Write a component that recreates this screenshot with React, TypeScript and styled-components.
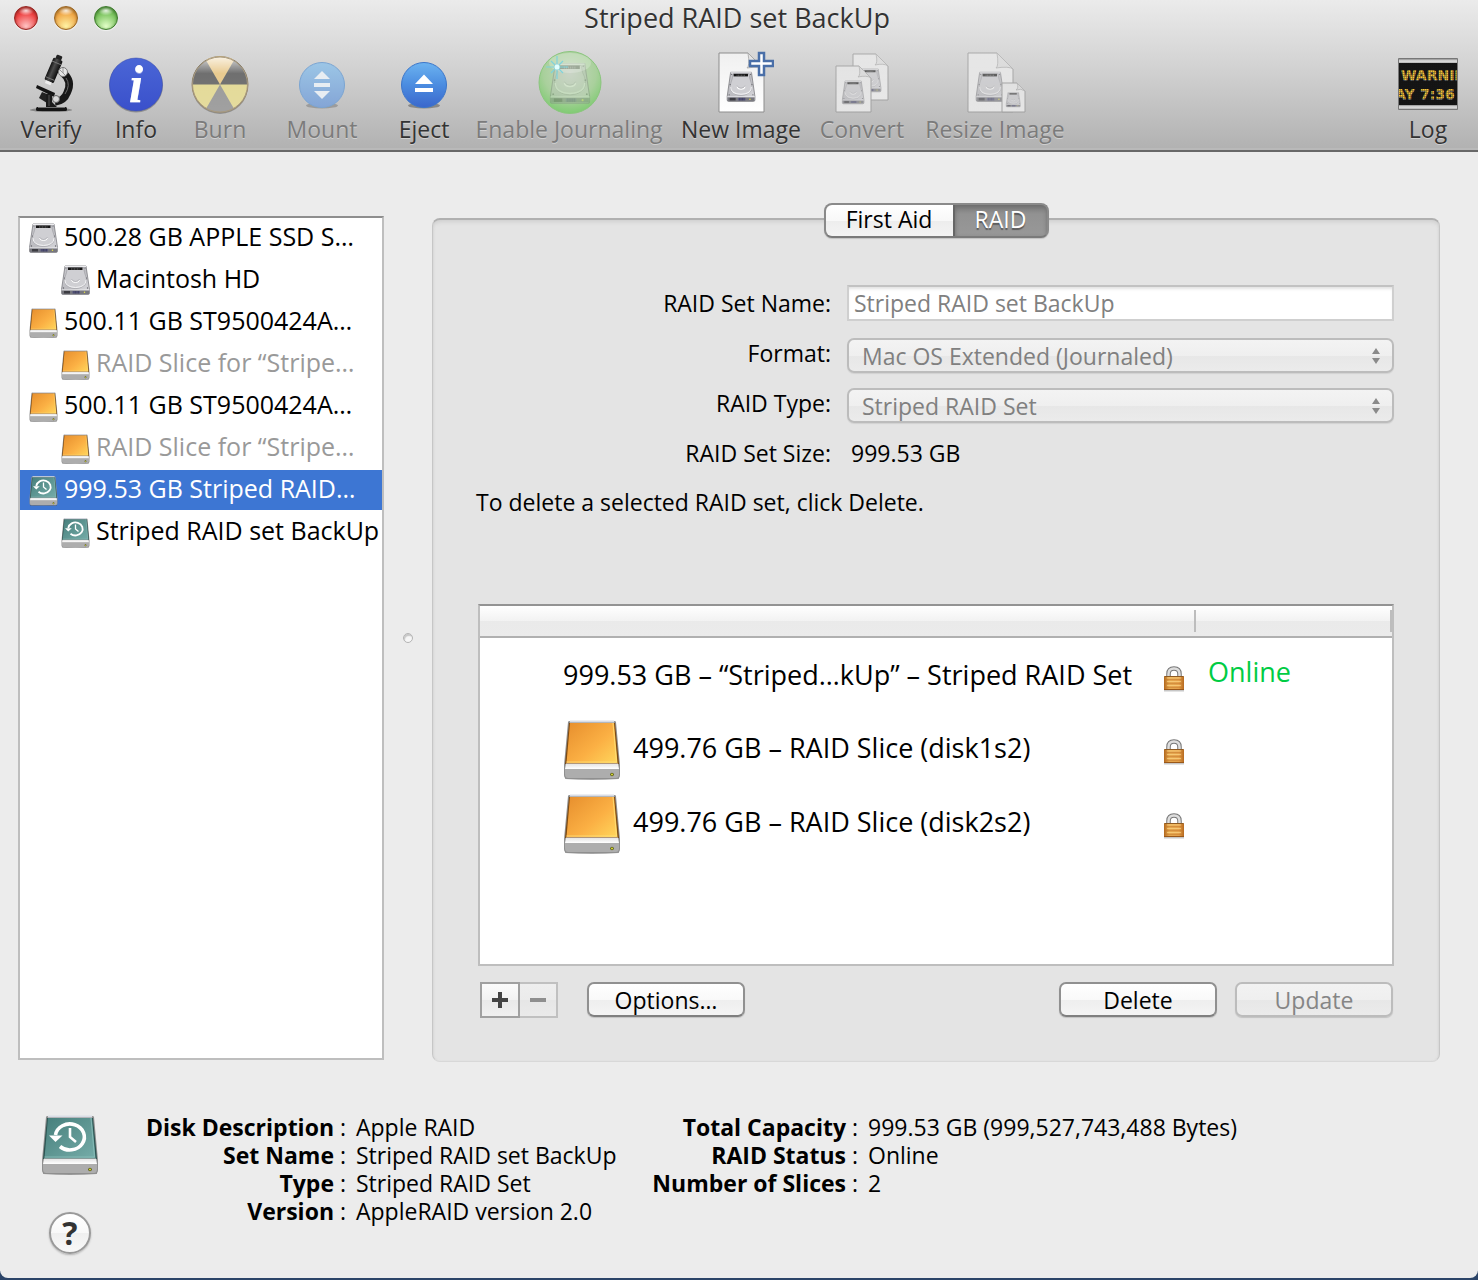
import React from "react";
import styled, { createGlobalStyle, css } from "styled-components";

const GlobalStyle = createGlobalStyle`
  *, *::before, *::after { box-sizing: border-box; }
  body { margin: 0; background: #2b4468; }
  body, button, input, select { font-family: "Open Sans", "Noto Sans", sans-serif; font-weight: 500; }
`;

/* ---------- window ---------- */

const Window = styled.div`
  display: flex;
  flex-direction: column;
  min-height: calc(100vh - 2px);
  min-width: 1280px;
  background: #ececec;
  border-radius: 0 0 8px 8px;
  color: #000;
  font-size: 23px;
  line-height: 28px;
`;

const Header = styled.header`
  background: linear-gradient(#ebebeb, #d2d2d2 45%, #b1b1b1);
  border-bottom: 2px solid #686868;
  box-shadow: inset 0 -2px 0 #b9b9b9;
`;

const TitleBar = styled.div`
  display: grid;
  grid-template-columns: 1fr auto 1fr;
  align-items: center;
  height: 36px;
  padding: 0 18px 0 14px;
`;

const Lights = styled.div`
  display: flex;
  gap: 16px;
`;

const Light = styled.button<{ $rim: string; $mid: string; $glow: string }>`
  width: 24px;
  height: 24px;
  padding: 0;
  border: 1px solid ${(p) => p.$rim};
  border-radius: 50%;
  background:
    radial-gradient(ellipse 8px 5px at 50% 16%, rgba(255, 255, 255, 0.85), rgba(255, 255, 255, 0) 100%),
    radial-gradient(circle at 50% 88%, ${(p) => p.$glow}, ${(p) => p.$mid} 60%, ${(p) => p.$rim} 110%);
  box-shadow: inset 0 1px 3px ${(p) => p.$rim}, 0 1px 1px rgba(255, 255, 255, 0.6);
`;

const Title = styled.h1`
  margin: 0;
  font-size: 27px;
  line-height: 36px;
  font-weight: 500;
  color: #333;
  text-shadow: 0 1px 0 rgba(255, 255, 255, 0.6);
`;

const Toolbar = styled.div`
  display: flex;
  gap: 20px;
  height: 114px;
  padding: 14px 18px 0;
`;

const ToolButton = styled.button<{ $width: number; $last?: boolean }>`
  display: flex;
  flex-direction: column;
  align-items: center;
  flex: none;
  width: ${(p) => p.$width}px;
  padding: 0;
  border: 0;
  background: none;
  font-size: 23px;
  line-height: 30px;
  color: #333;
  white-space: nowrap;
  text-shadow: 0 1px 0 rgba(255, 255, 255, 0.4);
  ${(p) => p.$last && css`margin-left: auto;`}
  &:disabled { color: #7b7b7b; }
  svg { display: block; flex: none; }
`;

/* ---------- body ---------- */

const Body = styled.main`
  display: flex;
  flex: 1;
  padding: 64px 38px 0 18px;
`;

const DiskList = styled.ul`
  display: flex;
  flex-direction: column;
  gap: 2px;
  flex: none;
  width: 366px;
  margin: 0;
  padding: 0;
  list-style: none;
  background: #fff;
  border: 2px solid #bebebe;
  border-top-color: #8e8e8e;
`;

const DiskRow = styled.li<{ $child?: boolean; $dim?: boolean; $selected?: boolean }>`
  display: flex;
  align-items: center;
  gap: 6px;
  height: 40px;
  padding-left: ${(p) => (p.$child ? 41 : 9)}px;
  font-size: 25px;
  line-height: 36px;
  white-space: nowrap;
  overflow: hidden;
  color: ${(p) => (p.$selected ? "#fff" : p.$dim ? "#999" : "#000")};
  background: ${(p) => (p.$selected ? "#3d76d3" : "transparent")};
  svg { flex: none; }
  span { padding-bottom: 4px; }
`;

const Splitter = styled.div`
  display: flex;
  align-items: center;
  justify-content: center;
  flex: none;
  width: 48px;
  &::before {
    content: "";
    width: 10px;
    height: 10px;
    border-radius: 50%;
    border: 1px solid #b4b4b4;
    background: #f6f6f6;
    box-shadow: inset 1px 2px 1px #c8c8c8;
  }
`;

const Panel = styled.section`
  display: flex;
  flex-direction: column;
  flex: 1;
  min-width: 0;
  margin: 2px 0 -2px;
  padding: 0 45px 43px;
  background: #e4e4e4;
  border: 1px solid #c6c6c6;
  border-top: 2px solid #b0b0b0;
  border-bottom-color: #d8d8d8;
  border-radius: 8px;
  box-shadow: inset 0 4px 4px -2px #cfcfcf, inset 2px 0 2px -1px #dadada, inset -2px 0 2px -1px #dadada;
`;

const Tabs = styled.div`
  display: flex;
  align-self: center;
  margin: -17px 0 47px;
  border: 2px solid #8a8a8a;
  border-bottom-color: #7a7a7a;
  border-radius: 8px;
  background: #8a8a8a;
  overflow: hidden;
  box-shadow: 0 1px 1px rgba(0, 0, 0, 0.15);
`;

const Tab = styled.button<{ $active?: boolean; $width: number }>`
  width: ${(p) => p.$width}px;
  height: 31px;
  padding: 0 0 2px;
  border: 0;
  font-size: 23px;
  line-height: 29px;
  color: ${(p) => (p.$active ? "#fff" : "#000")};
  background: ${(p) =>
    p.$active ? "linear-gradient(#7b7b7b, #929292 30%, #989898)" : "linear-gradient(#fff 0, #f8f8f8 50%, #ededed 51%, #f3f3f3)"};
  text-shadow: ${(p) => (p.$active ? "0 2px 1px rgba(0,0,0,.4)" : "none")};
  ${(p) => p.$active && css`border-left: 2px solid #666; box-shadow: inset 0 2px 4px #6d6d6d;`}
`;

const Form = styled.form`
  display: grid;
  grid-template-columns: 353px 1fr;
  column-gap: 16px;
`;

const Label = styled.label`
  height: 50px;
  line-height: 36px;
  text-align: right;
`;

const Field = styled.div`
  position: relative;
  height: 50px;
`;

const TextInput = styled.input`
  display: block;
  width: 100%;
  height: 36px;
  padding: 0 5px;
  border: 2px solid #cfcfcf;
  border-top-color: #c2c2c2;
  background: #fff;
  box-shadow: inset 0 3px 3px -1px #e2e2e2;
  font-size: 23px;
  color: #808080;
`;

const Select = styled.select`
  appearance: none;
  display: block;
  width: 100%;
  height: 35px;
  margin-top: 3px;
  padding: 0 40px 0 13px;
  border: 2px solid #bcbcbc;
  border-radius: 7px;
  background: linear-gradient(#f3f3f3, #efefef 50%, #e7e7e7 51%, #ebebeb);
  box-shadow: 0 1px 1px rgba(0, 0, 0, 0.08);
  font-size: 23px;
  color: #808080;
  opacity: 1;
`;

const Arrows = styled.svg`
  position: absolute;
  right: 13px;
  top: 12px;
  pointer-events: none;
`;

const SizeValue = styled.output`
  padding-left: 4px;
  line-height: 36px;
`;

const Hint = styled.p`
  margin: 0 0 85px -2px;
  line-height: 34px;
`;

const TableFrame = styled.div`
  flex: 1;
  min-height: 362px;
  background: #fff;
  border: 2px solid #bebebe;
  border-top-color: #939393;
`;

const Table = styled.table`
  width: 100%;
  border-collapse: collapse;
  table-layout: fixed;
  font-size: 27px;
  line-height: 36px;
`;

const HeadCell = styled.th<{ $width?: number }>`
  width: ${(p) => (p.$width ? `${p.$width}px` : "auto")};
  height: 31px;
  padding: 0;
  border-bottom: 2px solid #b0b0b0;
  background:
    linear-gradient(#bdbdbd, #bdbdbd) right 4px / 2px 22px no-repeat,
    linear-gradient(#fff, #f2f2f2 50%, #eaeaea 51%, #ebebeb);
`;

const NameCell = styled.td`
  height: 74px;
  padding: 0 11px 0 83px;
`;

const StateCell = styled.td`
  padding: 0 12px 5px;
  color: #00cc44;
  font-size: 27px;
`;

const Member = styled.div`
  display: flex;
  align-items: center;
  gap: 12px;
  white-space: nowrap;
  svg { flex: none; }
  svg:last-child { margin: 8px 0 0 auto; }
`;

const Actions = styled.div`
  display: flex;
  align-items: flex-start;
  gap: 18px;
  padding: 16px 1px 0 2px;
`;

const Pair = styled.div`
  display: flex;
  margin-right: 11px;
`;

const SquareButton = styled.button<{ $width: number }>`
  display: grid;
  place-items: center;
  width: ${(p) => p.$width}px;
  height: 36px;
  padding: 0;
  border: 2px solid #a0a0a0;
  background: linear-gradient(#fbfbfb, #f2f2f2 50%, #e9e9e9 51%, #f0f0f0);
  color: #444;
  &:disabled {
    border-color: #c0c0c0;
    border-left: 0;
    background: linear-gradient(#eeeeee, #ebebeb 50%, #e6e6e6 51%, #eaeaea);
    color: #8e8e8e;
  }
`;

const PushButton = styled.button<{ $push?: boolean }>`
  width: 158px;
  height: 35px;
  padding: 0;
  border: 2px solid #909090;
  border-bottom-color: #7f7f7f;
  border-radius: 7px;
  background: linear-gradient(#fff, #f9f9f9 50%, #eeeeee 51%, #f4f4f4);
  box-shadow: 0 1px 1px rgba(0, 0, 0, 0.15);
  font-size: 23px;
  line-height: 30px;
  color: #000;
  ${(p) => p.$push && css`margin-left: auto;`}
  &:disabled {
    border-color: #bcbcbc;
    background: linear-gradient(#f2f2f2, #efefef 50%, #e7e7e7 51%, #ebebeb);
    color: #858585;
  }
`;

/* ---------- footer ---------- */

const Footer = styled.footer`
  display: flex;
  align-items: flex-start;
  padding: 51px 38px 24px 40px;
`;

const FooterIcons = styled.div`
  display: flex;
  flex-direction: column;
  align-items: center;
  gap: 37px;
  width: 60px;
`;

const HelpButton = styled.button`
  width: 42px;
  height: 42px;
  padding: 0;
  border: 2px solid #999;
  border-radius: 50%;
  background: linear-gradient(#fff, #f8f8f8 50%, #efefef 51%, #f8f8f8);
  box-shadow: 0 1px 2px rgba(0, 0, 0, 0.25);
  font-size: 32px;
  line-height: 36px;
  font-weight: 700;
  color: #333;
`;

const Facts = styled.dl<{ $labels: number; $values: number }>`
  display: grid;
  grid-template-columns: ${(p) => p.$labels}px ${(p) => p.$values}px;
  column-gap: 6px;
  margin: 2px 0 0;
  white-space: nowrap;
  dt { text-align: right; font-weight: 700; }
  dd { margin: 0; }
  dd::before { content: ":"; display: inline-block; width: 16px; }
`;

/* ---------- drawings ---------- */

const Defs = () => (
  <svg width="0" height="0" style={{ display: "block" }} aria-hidden="true">
    <defs>
      <linearGradient id="metal" x1="0" y1="0" x2="1" y2="1">
        <stop offset="0" stopColor="#c9c9cd" />
        <stop offset="0.5" stopColor="#bcbcc1" />
        <stop offset="1" stopColor="#dcdce0" />
      </linearGradient>
      <linearGradient id="orange" x1="0" y1="0.1" x2="1" y2="1">
        <stop offset="0" stopColor="#e8912f" />
        <stop offset="0.55" stopColor="#fbb044" />
        <stop offset="1" stopColor="#ffd65c" />
      </linearGradient>
      <linearGradient id="teal" x1="0" y1="0" x2="1" y2="1">
        <stop offset="0" stopColor="#477f7c" />
        <stop offset="1" stopColor="#75aca8" />
      </linearGradient>
      <linearGradient id="lip" x1="0" y1="0" x2="0" y2="1">
        <stop offset="0" stopColor="#e2e2e2" />
        <stop offset="1" stopColor="#ffffff" />
      </linearGradient>
      <linearGradient id="brass" x1="0" y1="0" x2="1" y2="0">
        <stop offset="0" stopColor="#b0661c" />
        <stop offset="0.25" stopColor="#eab056" />
        <stop offset="0.75" stopColor="#e9a850" />
        <stop offset="1" stopColor="#b5681e" />
      </linearGradient>
      <linearGradient id="info" x1="0" y1="0" x2="0" y2="1">
        <stop offset="0" stopColor="#4a66d6" />
        <stop offset="1" stopColor="#3a50cb" />
      </linearGradient>
      <linearGradient id="blue" x1="0" y1="0" x2="0" y2="1">
        <stop offset="0" stopColor="#6cb3f0" />
        <stop offset="0.5" stopColor="#4b8ce0" />
        <stop offset="1" stopColor="#3a67cc" />
      </linearGradient>
      <linearGradient id="paleblue" x1="0" y1="0" x2="0" y2="1">
        <stop offset="0" stopColor="#9cc6e6" />
        <stop offset="1" stopColor="#84a5d6" />
      </linearGradient>
      <linearGradient id="burnshine" x1="0" y1="0" x2="0" y2="1">
        <stop offset="0" stopColor="#fff" stopOpacity="0.75" />
        <stop offset="0.3" stopColor="#fff" stopOpacity="0.05" />
        <stop offset="1" stopColor="#fff" stopOpacity="0.1" />
      </linearGradient>
      <radialGradient id="green" cx="0.5" cy="0.35" r="0.65">
        <stop offset="0" stopColor="#c8d8c0" />
        <stop offset="0.65" stopColor="#a9d09c" />
        <stop offset="1" stopColor="#7fcb72" />
      </radialGradient>
      <linearGradient id="paper" x1="0" y1="0" x2="0" y2="1">
        <stop offset="0" stopColor="#f0f0f0" />
        <stop offset="1" stopColor="#ffffff" />
      </linearGradient>
      <linearGradient id="barrel" x1="0" y1="0" x2="1" y2="0">
        <stop offset="0" stopColor="#111" />
        <stop offset="0.4" stopColor="#4c4c4c" />
        <stop offset="1" stopColor="#0c0c0c" />
      </linearGradient>
      <linearGradient id="chrome" x1="0" y1="0" x2="0" y2="1">
        <stop offset="0" stopColor="#8f8f8f" />
        <stop offset="0.5" stopColor="#e4e4e4" />
        <stop offset="1" stopColor="#b2b2b2" />
      </linearGradient>
      <pattern id="leds" width="2" height="2" patternUnits="userSpaceOnUse">
        <path d="M0 1.5H2M1.5 0V2" stroke="#111" strokeWidth="0.5" opacity="0.6" />
      </pattern>
    </defs>
  </svg>
);

const HardDiskArt = () => (
  <g>
    <path d="M9 2H51L58 49V56Q58 59 55 59H5Q2 59 2 56V49Z" fill="url(#metal)" stroke="#77777c" strokeWidth="1.5" />
    <path d="M9 3H51" stroke="#ededf0" strokeWidth="2" />
    <path d="M14 5H46L48 15Q55 28 50 38Q43 47 30 47Q17 47 10 38Q5 28 12 15Z" fill="#cfcfd3" stroke="#98989d" strokeWidth="1.2" />
    <path d="M9 30Q9 44 30 45Q51 44 51 30" fill="none" stroke="#f3f3f5" strokeWidth="2" />
    <rect x="15" y="5" width="29" height="5" fill="#151515" />
    <path d="M22 6.5V9.5M25 6.5V9.5M28 6.5V9.5M31 6.5V9.5M34 6.5V9.5M37 6.5V9.5" stroke="#888" strokeWidth="1" />
    <path d="M22 30Q23 35 30 35Q37 35 38 30" fill="none" stroke="#fff" strokeWidth="2" />
    <path d="M22 28Q24 33 30 33Q36 33 38 28" fill="none" stroke="#9b9ba0" strokeWidth="1" />
    <g fill="#606066">
      <circle cx="11" cy="6" r="1.2" />
      <circle cx="49" cy="6" r="1.2" />
      <circle cx="8" cy="26" r="1.2" />
      <circle cx="52" cy="26" r="1.2" />
      <circle cx="6" cy="46" r="1.3" />
      <circle cx="54" cy="46" r="1.3" />
    </g>
    <path d="M2 50H58" stroke="#f5f5f7" strokeWidth="1.5" />
    <rect x="3" y="51" width="54" height="7" fill="#77777e" />
    <rect x="7" y="52" width="12" height="5" fill="#3c3c42" />
    <rect x="24" y="52" width="15" height="5" fill="#5a5a80" />
    <path d="M27 52V57M30 52V57M33 52V57M36 52V57" stroke="#2f2f44" strokeWidth="1" />
    <circle cx="48" cy="54.5" r="1.5" fill="#e4e04a" />
  </g>
);

const HardDisk = () => (
  <svg width="29" height="32" viewBox="1 -2 58 64" aria-hidden="true">
    <HardDiskArt />
  </svg>
);

const ExternalDisk = ({ large = false, backup = false }: { large?: boolean; backup?: boolean }) => (
  <svg width={large ? 58 : 29} height={large ? 64 : 32} viewBox="1 -4 58 64" aria-hidden="true">
    <path d="M3 57Q30 61 57 57V59Q30 61 3 59Z" fill="#000" opacity="0.35" />
    <path d="M6 2Q6 1 8 1H52Q54 1 54 2L58 45V55Q58 59 54 59H6Q2 59 2 55V45Z" fill="#8f8f8f" />
    <path d="M7 3H53L57 44H3Z" fill={backup ? "#2c5452" : "#7d4a12"} />
    <path d="M8 1.5H52" stroke="#d9dde6" strokeWidth="2" />
    <path d="M8 3H52L55.5 43H4.500Z" fill={backup ? "url(#teal)" : "url(#orange)"} />
    <path d="M51 3L54.500 42H4.500" fill="none" stroke={backup ? "#8cc0bc" : "#ffe27a"} strokeWidth="1" opacity="0.8" />
    <path d="M4 43.500H56L57 49H3Z" fill="url(#lip)" />
    <path d="M3 49H57V54Q57 58 54 58H6Q3 58 3 54Z" fill="#adadad" />
    <circle cx="50" cy="54.500" r="1.800" fill="#55560f" />
    <circle cx="50" cy="54.500" r="1" fill="#dde03c" />
    {backup && (
      <g fill="none" stroke="#fff">
        <path d="M15.500 20A14.500 13 0 1 1 20 31.500" strokeWidth="3.600" />
        <path d="M9 20.500H22.500L15.500 27Z" fill="#fff" stroke="none" />
        <path d="M30 13V22L36 27" strokeWidth="2.600" />
      </g>
    )}
  </svg>
);

const Padlock = () => (
  <svg width="22" height="26" viewBox="0 0 22 26" role="img" aria-label="Locked">
    <rect x="1" y="23" width="20" height="2.500" fill="#000" opacity="0.22" />
    <path d="M5.500 11V8Q5.500 2.500 11 2.500Q16.500 2.500 16.500 8V11" fill="none" stroke="#777" strokeWidth="4.500" />
    <path d="M5.500 11V8Q5.500 2.500 11 2.500Q16.500 2.500 16.500 8V11" fill="none" stroke="#dedede" strokeWidth="2.500" />
    <rect x="1" y="10" width="20" height="14" rx="1" fill="url(#brass)" />
    <path d="M1.500 10.500H20.500" stroke="#8f5a22" strokeWidth="1" />
    <path d="M2 13.500H20M2 17.500H20M2 21.500H20" stroke="#c2732a" strokeWidth="1.500" opacity="0.5" />
    <path d="M4 12H18M4 15.500H18M4 19.500H18" stroke="#ffda8c" strokeWidth="1" opacity="0.6" />
    <path d="M1 23.500H21" stroke="#9a581a" strokeWidth="1" />
  </svg>
);

const Microscope = () => (
  <svg width="64" height="64" viewBox="0 0 64 64" aria-hidden="true">
    <ellipse cx="32" cy="60" rx="21" ry="2" fill="#000" opacity="0.3" />
    <path d="M44 23Q54 31 48 43Q45 51 36 52" fill="none" stroke="#181818" strokeWidth="7.500" />
    <path d="M47 28Q52 35 46 44" fill="none" stroke="#6a6a6a" strokeWidth="1" />
    <g transform="rotate(23 36 22)">
      <rect x="31" y="5" width="6" height="6" rx="1" fill="#222" />
      <rect x="29" y="9" width="10" height="24" rx="1.500" fill="url(#barrel)" />
      <path d="M29 13H39M29 30H39" stroke="#777" strokeWidth="1" />
      <rect x="31" y="33" width="6" height="3" fill="#eee" />
    </g>
    <path d="M18 35L36 43L35 47L17 38Z" fill="#141414" />
    <path d="M23 42L20 48L28 53V44Z" fill="#222" />
    <path d="M27 44H33V52L38 57H27Z" fill="#1b1b1b" />
    <path d="M30 45V56" stroke="#555" strokeWidth="1" />
    <rect x="17" y="57" width="31" height="4" rx="1.500" fill="#151515" />
    <path d="M19 57.500H46" stroke="#707070" strokeWidth="1" />
    <circle cx="44" cy="22" r="4.500" fill="#e6e6e6" stroke="#777" />
    <path d="M41 20L46 25M44 18V23" stroke="#999" strokeWidth="1" />
    <circle cx="37" cy="49" r="3.500" fill="#d9d9d9" stroke="#666" />
  </svg>
);

const InfoIcon = () => (
  <svg width="64" height="64" viewBox="0 0 64 64" aria-hidden="true">
    <circle cx="32" cy="35.500" r="27" fill="#000" opacity="0.25" />
    <circle cx="32" cy="34.500" r="26.500" fill="url(#info)" stroke="#3448ae" strokeWidth="0.500" />
    <text x="32" y="52" textAnchor="middle" fill="#fff" fontFamily="Liberation Serif, serif" fontWeight="700" fontStyle="italic" fontSize="52">
      i
    </text>
  </svg>
);

const BurnIcon = () => (
  <svg width="64" height="64" viewBox="0 0 64 64" aria-hidden="true">
    <circle cx="32" cy="36" r="28" fill="#000" opacity="0.25" />
    <circle cx="32" cy="34.500" r="28" fill="#e2d893" stroke="#97876a" />
    <path d="M32 34.500L18 10.250A28 28 0 0 1 46 10.250Z" fill="#e8c88a" />
    <path d="M32 34.500H4A28 28 0 0 1 18 10.250Z" fill="#686868" />
    <path d="M32 34.500L46 10.250A28 28 0 0 1 60 34.500Z" fill="#686868" />
    <path d="M32 34.500L46 58.750A28 28 0 0 1 18 58.750Z" fill="#969696" />
    <circle cx="32" cy="34.500" r="27.500" fill="url(#burnshine)" stroke="#a89a80" strokeWidth="1" />
  </svg>
);

const MountIcon = () => (
  <svg width="64" height="64" viewBox="0 0 64 64" aria-hidden="true">
    <ellipse cx="32" cy="55.500" rx="16" ry="3" fill="#000" opacity="0.2" />
    <circle cx="32" cy="35" r="22.500" fill="url(#paleblue)" stroke="#7ba5d2" />
    <path d="M24 29L32 21L40 29ZM24 33H40V37H24ZM24 41H40L32 49Z" fill="#e8edf2" />
  </svg>
);

const EjectIcon = () => (
  <svg width="64" height="64" viewBox="0 0 64 64" aria-hidden="true">
    <ellipse cx="32" cy="55.500" rx="16" ry="3" fill="#000" opacity="0.3" />
    <circle cx="32" cy="35" r="22.500" fill="url(#blue)" stroke="#3b76ca" />
    <path d="M23 34L32 24.500L41 34ZM23 38H41V42H23Z" fill="#fff" />
  </svg>
);

const JournalIcon = () => (
  <svg width="66" height="64" viewBox="0 2 66 64" aria-hidden="true">
    <circle cx="34" cy="34.500" r="31" fill="url(#green)" stroke="#8bc67e" />
    <g transform="translate(13 14) scale(0.7)" opacity="0.35">
      <HardDiskArt />
    </g>
    <ellipse cx="34" cy="15" rx="21" ry="10" fill="#fff" opacity="0.22" />
    <path d="M21 8V31M10 19H32M15 13L27 25M27 13L15 25" stroke="#7fd3dc" strokeWidth="1.200" />
    <circle cx="21" cy="19" r="2.500" fill="#e0ffff" />
  </svg>
);

const Sheet = ({ x, y, w, h, fold }: { x: number; y: number; w: number; h: number; fold: number }) => (
  <g transform={`translate(${x} ${y})`}>
    <path d={`M0 0H${w - fold}L${w} ${fold}V${h}H0Z`} fill="url(#paper)" stroke="#8d8d8d" />
    <path d={`M${w - fold} 0Q${w - fold + 2} ${fold - 3} ${w - fold - 1} ${fold - 1}Q${w - 4} ${fold - 3} ${w} ${fold}Z`} fill="#e3e3e3" stroke="#a5a5a5" strokeWidth="0.800" />
    <g transform={`translate(${w * 0.16} ${h * 0.31}) scale(${(w * 0.66) / 60} ${(h * 0.52) / 60})`}>
      <HardDiskArt />
    </g>
  </g>
);

const NewImageIcon = () => (
  <svg width="66" height="64" viewBox="0 0 66 64" aria-hidden="true">
    <Sheet x={11} y={3} w={45} h={59} fold={16} />
    <path d="M51 3H56V11H65V16H56V25H51V16H42V11H51Z" fill="#fff" stroke="#4a6fa8" strokeWidth="2.500" />
  </svg>
);

const ConvertIcon = () => (
  <svg width="64" height="64" viewBox="0 0 64 64" opacity="0.6" aria-hidden="true">
    <Sheet x={23} y={4} w={35} h={46} fold={12} />
    <Sheet x={6} y={16} w={35} h={46} fold={12} />
  </svg>
);

const ResizeIcon = () => (
  <svg width="64" height="64" viewBox="0 0 64 64" opacity="0.6" aria-hidden="true">
    <Sheet x={5} y={3} w={45} h={59} fold={16} />
    <Sheet x={39} y={33} w={23} h={29} fold={8} />
  </svg>
);

const LogIcon = () => (
  <svg width="64" height="64" viewBox="0 0 64 64" aria-hidden="true">
    <rect x="2" y="8" width="60" height="52" rx="1" fill="#777" />
    <rect x="3" y="9" width="58" height="4" fill="url(#chrome)" />
    <rect x="3" y="55" width="58" height="4" fill="url(#chrome)" />
    <svg x="3" y="13" width="58" height="42" viewBox="0 0 58 42">
      <rect width="58" height="42" fill="#161616" />
      <g fill="#f3c33a" fontFamily="DejaVu Sans, sans-serif" fontWeight="700" fontSize="14">
        <text x="2" y="17">WARNIN</text>
        <text x="-4" y="36">AY</text>
        <text x="21" y="36">7:36</text>
      </g>
      <rect width="58" height="42" fill="url(#leds)" />
    </svg>
  </svg>
);

/* ---------- data ---------- */

const tools = [
  { label: "Verify", width: 66, icon: <Microscope /> },
  { label: "Info", width: 64, icon: <InfoIcon /> },
  { label: "Burn", width: 64, icon: <BurnIcon />, disabled: true },
  { label: "Mount", width: 100, icon: <MountIcon />, disabled: true },
  { label: "Eject", width: 64, icon: <EjectIcon /> },
  { label: "Enable Journaling", width: 186, icon: <JournalIcon />, disabled: true },
  { label: "New Image", width: 118, icon: <NewImageIcon /> },
  { label: "Convert", width: 84, icon: <ConvertIcon />, disabled: true },
  { label: "Resize Image", width: 142, icon: <ResizeIcon />, disabled: true },
  { label: "Log", width: 64, icon: <LogIcon />, last: true },
];

const disks = [
  { name: "500.28 GB APPLE SSD S…", icon: <HardDisk /> },
  { name: "Macintosh HD", icon: <HardDisk />, child: true },
  { name: "500.11 GB ST9500424A…", icon: <ExternalDisk /> },
  { name: "RAID Slice for “Stripe…", icon: <ExternalDisk />, child: true, dim: true },
  { name: "500.11 GB ST9500424A…", icon: <ExternalDisk /> },
  { name: "RAID Slice for “Stripe…", icon: <ExternalDisk />, child: true, dim: true },
  { name: "999.53 GB Striped RAID…", icon: <ExternalDisk backup />, selected: true },
  { name: "Striped RAID set BackUp", icon: <ExternalDisk backup />, child: true },
];

const members = [
  { name: "999.53 GB – “Striped…kUp” – Striped RAID Set", state: "Online" },
  { name: "499.76 GB – RAID Slice (disk1s2)", slice: true },
  { name: "499.76 GB – RAID Slice (disk2s2)", slice: true },
];

const diskFacts = [
  ["Disk Description", "Apple RAID"],
  ["Set Name", "Striped RAID set BackUp"],
  ["Type", "Striped RAID Set"],
  ["Version", "AppleRAID version 2.0"],
];

const raidFacts = [
  ["Total Capacity", "999.53 GB (999,527,743,488 Bytes)"],
  ["RAID Status", "Online"],
  ["Number of Slices", "2"],
];

const PopUp = ({ id, value }: { id: string; value: string }) => (
  <Field>
    <Select id={id} disabled defaultValue={value}>
      <option>{value}</option>
    </Select>
    <Arrows width="10" height="18" viewBox="0 0 10 18" aria-hidden="true">
      <path d="M5 1L9 7H1ZM1 11H9L5 17Z" fill="#8a8a8a" />
    </Arrows>
  </Field>
);

const FactList = ({ rows, labels, values }: { rows: string[][]; labels: number; values: number }) => (
  <Facts $labels={labels} $values={values}>
    {rows.map(([term, value]) => (
      <React.Fragment key={term}>
        <dt>{term}</dt>
        <dd>{value}</dd>
      </React.Fragment>
    ))}
  </Facts>
);

export default function App() {
  return (
    <>
      <GlobalStyle />
      <Window>
        <Header>
          <Defs />
          <TitleBar>
            <Lights>
              <Light aria-label="Close" $rim="#96231f" $mid="#ee4444" $glow="#ffc4c4" />
              <Light aria-label="Minimize" $rim="#9a6420" $mid="#f0a848" $glow="#fff3a4" />
              <Light aria-label="Zoom" $rim="#3d7a2c" $mid="#7cc460" $glow="#e2ffc8" />
            </Lights>
            <Title>Striped RAID set BackUp</Title>
          </TitleBar>
          <Toolbar>
            {tools.map((t) => (
              <ToolButton key={t.label} $width={t.width} $last={t.last} disabled={t.disabled}>
                {t.icon}
                {t.label}
              </ToolButton>
            ))}
          </Toolbar>
        </Header>

        <Body>
          <DiskList>
            {disks.map((d, i) => (
              <DiskRow key={i} $child={d.child} $dim={d.dim} $selected={d.selected}>
                {d.icon}
                <span>{d.name}</span>
              </DiskRow>
            ))}
          </DiskList>
          <Splitter />
          <Panel>
            <Tabs role="tablist">
              <Tab role="tab" $width={127}>First Aid</Tab>
              <Tab role="tab" aria-selected $active $width={94}>RAID</Tab>
            </Tabs>
            <Form>
              <Label htmlFor="set-name">RAID Set Name:</Label>
              <Field>
                <TextInput id="set-name" disabled defaultValue="Striped RAID set BackUp" />
              </Field>
              <Label htmlFor="format">Format:</Label>
              <PopUp id="format" value="Mac OS Extended (Journaled)" />
              <Label htmlFor="raid-type">RAID Type:</Label>
              <PopUp id="raid-type" value="Striped RAID Set" />
              <Label htmlFor="set-size">RAID Set Size:</Label>
              <SizeValue id="set-size">999.53 GB</SizeValue>
            </Form>
            <Hint>To delete a selected RAID set, click Delete.</Hint>
            <TableFrame>
              <Table>
                <thead>
                  <tr>
                    <HeadCell aria-label="Name" />
                    <HeadCell aria-label="Status" $width={196} />
                  </tr>
                </thead>
                <tbody>
                  {members.map((m) => (
                    <tr key={m.name}>
                      <NameCell>
                        <Member>
                          {m.slice && <ExternalDisk large />}
                          <span>{m.name}</span>
                          <Padlock />
                        </Member>
                      </NameCell>
                      <StateCell>{m.state}</StateCell>
                    </tr>
                  ))}
                </tbody>
              </Table>
            </TableFrame>
            <Actions>
              <Pair>
                <SquareButton $width={40} aria-label="Add">
                  <svg width="16" height="16" viewBox="0 0 16 16">
                    <path d="M8 0V16M0 8H16" stroke="currentColor" strokeWidth="4" />
                  </svg>
                </SquareButton>
                <SquareButton $width={38} aria-label="Remove" disabled>
                  <svg width="16" height="16" viewBox="0 0 16 16">
                    <path d="M0 8H16" stroke="currentColor" strokeWidth="4" />
                  </svg>
                </SquareButton>
              </Pair>
              <PushButton>Options…</PushButton>
              <PushButton $push>Delete</PushButton>
              <PushButton disabled>Update</PushButton>
            </Actions>
          </Panel>
        </Body>

        <Footer>
          <FooterIcons>
            <ExternalDisk large backup />
            <HelpButton aria-label="Help">?</HelpButton>
          </FooterIcons>
          <FactList rows={diskFacts} labels={234} values={284} />
          <FactList rows={raidFacts} labels={222} values={410} />
        </Footer>
      </Window>
    </>
  );
}
